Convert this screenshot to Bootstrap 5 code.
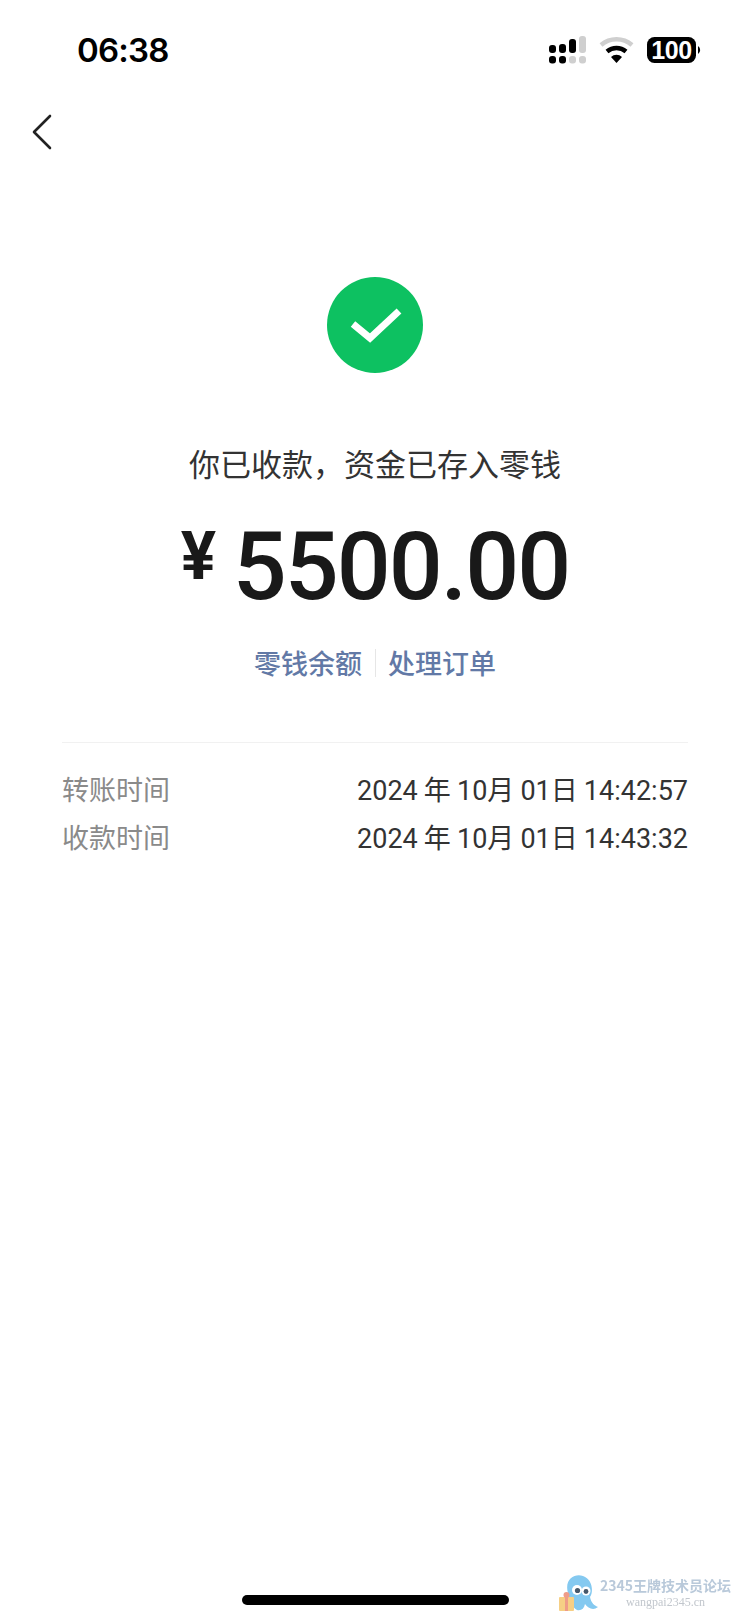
<!DOCTYPE html>
<html lang="zh-CN"><head><meta charset="utf-8">
<link href="https://cdn.jsdelivr.net/npm/bootstrap@5.3.0/dist/css/bootstrap.min.css" rel="stylesheet">
<style>
html,body{margin:0;background:#fff;}
.phone{width:750px;height:1623px;position:relative;overflow:hidden;font-family:"Noto Sans CJK SC","Liberation Sans",sans-serif;}
.statusbar{height:100px;padding:2px 48px 0 77px;}
.clock{font:600 33px/1 "Inter","Liberation Sans",sans-serif;letter-spacing:-.8px;color:#000;margin-top:-2px;}
.backrow{height:56px;padding:14px 0 0 31px;}
.hero{padding-top:121px;}
.okdot{width:96px;height:96px;border-radius:50%;background:#0dc161;}
.headline{margin-top:68px;font-size:31px;line-height:44px;color:#333;}
.sum{margin-top:34px;color:#191919;font-family:Roboto,"Liberation Sans",sans-serif;font-weight:500;line-height:1;}
.yen{font-size:66px;width:52px;line-height:1;align-self:flex-start;margin-top:5px;font-weight:700;}
.figure{font-size:95px;letter-spacing:-2px;line-height:96px;}
.linksrow{margin-top:29px;font-size:27px;line-height:38px;color:#6279a6;font-weight:500;}
.splitbar{width:1px;height:28px;background:#e6e6e6;margin:0 12.5px;}
.infolist{margin:60px 62px 0;padding-top:24px;border-top:1px solid #f1f1f1;font-size:27px;}
.inforow{height:48px;line-height:48px;}
.infokey{color:#8a8a8a;line-height:44px;}
.infoval{color:#333;font-family:Roboto,"Noto Sans CJK SC",sans-serif;font-size:27px;word-spacing:-.6px;}
.homebar{position:absolute;left:242px;bottom:18px;width:267px;height:10px;border-radius:5px;background:#000;}
.stamp{position:absolute;left:557px;top:1573px;gap:1px;filter:blur(.5px);}
.stamptxt{color:#b9c9da;line-height:1;text-align:center;}
.stamptop{font:700 14px/16px "Noto Sans CJK SC",sans-serif;white-space:nowrap;}
.stampsub{font:12px/14px "Liberation Serif",serif;color:#c2c7cd;margin-top:2px;}
</style></head><body>
<div class="phone">
<div class="statusbar d-flex justify-content-between align-items-center">
<span class="clock">06:38</span>
<svg width="153" height="30" viewBox="-3 0 153 30" aria-hidden="true">
<g fill="#000"><rect x="-3" y="9" width="7" height="8" rx="3"/><rect x="7" y="8" width="7" height="9" rx="3"/><rect x="17" y="3" width="7" height="14" rx="3"/>
<rect x="-3" y="20" width="7" height="7.5" rx="3"/><rect x="7" y="20" width="7" height="7.5" rx="3"/></g>
<g fill="#cfcfcf"><rect x="27" y="0" width="7" height="17" rx="3"/><rect x="17" y="20" width="7" height="7.5" rx="3"/><rect x="27" y="20" width="7" height="7.5" rx="3"/></g>
<path d="M49 9 A24 24 0 0 1 80 9" fill="none" stroke="#cfcfcf" stroke-width="4.5"/>
<path d="M55 15.5 A15 15 0 0 1 74 15.5" fill="none" stroke="#000" stroke-width="4.5"/>
<path d="M59 21 L64.5 27 L70 21 A8 8 0 0 0 59 21Z" fill="#000"/>
<rect x="95" y="1" width="49" height="26" rx="7.5" fill="#000"/>
<path d="M146 10 a4 4.5 0 0 1 0 8z" fill="#000"/>
<text x="119.5" y="22.5" text-anchor="middle" font-family="Liberation Sans" font-weight="700" font-size="25" letter-spacing="-.4" fill="#fff">100</text>
</svg>
</div>
<div class="backrow">
<svg width="22" height="36" viewBox="0 0 22 36" aria-hidden="true"><path d="M19 2 L3 18 L19 34" fill="none" stroke="#222" stroke-width="2.6" stroke-linecap="round" stroke-linejoin="round"/></svg>
</div>
<div class="hero d-flex flex-column align-items-center">
<div class="okdot d-flex align-items-center justify-content-center">
<svg width="96" height="96" viewBox="0 0 96 96" aria-hidden="true"><path d="M26 47 L43 61 L72 34" fill="none" stroke="#fff" stroke-width="7" stroke-linejoin="miter"/></svg>
</div>
<div class="headline">你已收款&#xFF0C;资金已存入零钱</div>
<div class="sum d-flex justify-content-center"><span class="yen">¥</span><span class="figure">5500.00</span></div>
<div class="linksrow d-flex align-items-center"><span>零钱余额</span><span class="splitbar"></span><span>处理订单</span></div>
</div>
<div class="infolist">
<div class="inforow d-flex justify-content-between"><span class="infokey">转账时间</span><span class="infoval">2024 年 10月 01日 14:42:57</span></div>
<div class="inforow d-flex justify-content-between"><span class="infokey">收款时间</span><span class="infoval">2024 年 10月 01日 14:43:32</span></div>
</div>
<div class="homebar"></div>
<div class="stamp d-flex align-items-center">
<svg width="42" height="40" viewBox="0 0 42 40" aria-hidden="true">
<path d="M11 20 C7 6 18 0 26 3 C35 6 37 18 33 24 C34 30 38 33 41 34 C36 38 31 35 28 31 C27 36 24 38 20 37 C15 34 12 28 11 20Z" fill="#84c9f0"/>
<circle cx="20" cy="17" r="5" fill="#fff"/><circle cx="29" cy="18" r="4.5" fill="#fff"/><circle cx="20.5" cy="17.5" r="2.6" fill="#46586a"/><circle cx="29" cy="18.5" r="2.4" fill="#46586a"/>
<rect x="2" y="24" width="15" height="14" rx="1" fill="#f6cf85"/><rect x="8" y="24" width="3" height="14" fill="#ef9c88"/><circle cx="9.5" cy="22" r="3" fill="#ef9c88"/>
</svg>
<div class="stamptxt"><div class="stamptop">2345王牌技术员论坛</div><div class="stampsub">wangpai2345.cn</div></div>
</div>
</div>
<script src="https://cdn.jsdelivr.net/npm/bootstrap@5.3.0/dist/js/bootstrap.bundle.min.js"></script>
</body></html>
